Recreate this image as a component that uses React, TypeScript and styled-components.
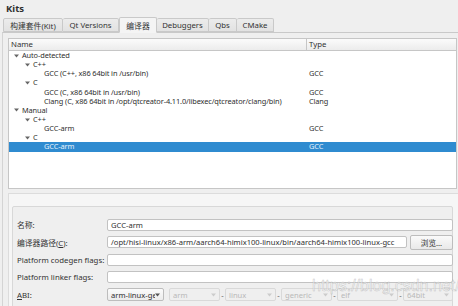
import React from 'react';
import styled, { createGlobalStyle } from 'styled-components';

const GlobalStyle = createGlobalStyle`
  html, body {
    margin: 0;
    padding: 0;
    background: #efefef;
    overflow: hidden;
  }
  body {
    font-family: "Noto Sans", "Noto Sans CJK SC", sans-serif;
    color: #3c3c3c;
    font-size: 8px;
  }
`;

const Page = styled.div`
  position: relative;
  width: 458px;
  height: 306px;
  overflow: hidden;
`;

const Title = styled.div`
  height: 17px;
  padding-left: 6px;
  font-size: 9.5px;
  font-weight: bold;
  line-height: 17px;
  color: #2e2e2e;
`;

const TabBar = styled.div`
  display: flex;
  align-items: flex-end;
  height: 15px;
  padding-left: 3px;
  position: relative;
  z-index: 1;
`;

const Tab = styled.div<{ $w: number; $active?: boolean }>`
  width: ${(p) => p.$w}px;
  height: ${(p) => (p.$active ? 16 : 14)}px;
  box-sizing: border-box;
  display: flex;
  align-items: center;
  justify-content: center;
  border: 1px solid #c9c9c9;
  border-left: ${(p) => (p.$active ? '1px solid #c9c9c9' : 'none')};
  border-bottom: ${(p) => (p.$active ? '1px solid #f4f4f4' : '1px solid #c9c9c9')};
  border-radius: 2px 2px 0 0;
  background: ${(p) => (p.$active ? '#f4f4f4' : 'linear-gradient(#ececec, #e2e2e2)')};
  font-size: 7.8px;
  color: #333;
  white-space: nowrap;
  margin-bottom: ${(p) => (p.$active ? '-1px' : '0')};
  &:first-child {
    border-left: 1px solid #c9c9c9;
  }
`;

const Pane = styled.div`
  margin-left: 2px;
  border-top: 1px solid #c9c9c9;
  border-left: 1px solid #d4d4d4;
  padding: 5px 0 0 5px;
`;

const Tree = styled.div`
  height: 151px;
  box-sizing: border-box;
  margin-right: 1px;
  border: 1px solid #c6c6c6;
  background: #ffffff;
  overflow: hidden;
`;

const HeaderRow = styled.div`
  display: grid;
  grid-template-columns: 297px 1fr;
  height: 11px;
  background: linear-gradient(#fbfbfb, #ececec);
  border-bottom: 1px solid #c6c6c6;
`;

const HeaderCell = styled.div<{ $divider?: boolean }>`
  padding-left: 2px;
  line-height: 11px;
  font-size: 7.8px;
  color: #333;
  border-left: ${(p) => (p.$divider ? '1px solid #c6c6c6' : 'none')};
`;

const Row = styled.div<{ $selected?: boolean }>`
  display: grid;
  grid-template-columns: 297px 1fr;
  height: 9.15px;
  line-height: 9.15px;
  font-size: 7.4px;
  letter-spacing: -0.12px;
  white-space: nowrap;
  background: ${(p) => (p.$selected ? '#2f8bd0' : 'transparent')};
  color: ${(p) => (p.$selected ? '#e6f1fa' : '#2f2f2f')};
`;

const NameCell = styled.div<{ $level: number }>`
  display: flex;
  align-items: center;
  padding-left: ${(p) => 2 + p.$level * 11}px;
  overflow: visible;
`;

const TypeCell = styled.div`
  padding-left: 3px;
`;

const Twisty = styled.span`
  display: inline-flex;
  width: 11px;
  justify-content: center;
  align-items: center;
`;

const Spacer = styled.span`
  display: inline-block;
  width: 11px;
`;

const Details = styled.div`
  margin-top: 4px;
  height: 120px;
  border: 1px solid #dcdcdc;
  border-right: none;
  background: #f6f6f6;
  padding: 12px 5px 0 3px;
`;

const Group = styled.div`
  height: 110px;
  border: 1px solid #d8d8d8;
  border-radius: 2px;
  background: #efefef;
  padding: 9px 2px 0 4px;
`;

const Form = styled.div`
  display: grid;
  grid-template-columns: 90px 1fr;
  grid-auto-rows: 17.5px;
  align-items: center;
`;

const Label = styled.div`
  font-size: 7.8px;
  color: #333;
  white-space: nowrap;
`;

const Input = styled.div`
  height: 12px;
  box-sizing: border-box;
  border: 1px solid #c2c2c2;
  border-radius: 2px;
  background: #fff;
  padding-left: 3px;
  font-size: 7.6px;
  line-height: 10px;
  color: #2f2f2f;
  white-space: nowrap;
  overflow: hidden;
  flex: 1;
`;

const FieldLine = styled.div`
  display: flex;
  align-items: center;
  gap: 3px;
`;

const Button = styled.div`
  width: 43px;
  height: 15px;
  box-sizing: border-box;
  border: 1px solid #bdbdbd;
  border-radius: 2px;
  background: linear-gradient(#fafafa, #e9e9e9);
  display: flex;
  align-items: center;
  justify-content: center;
  font-size: 7.6px;
  color: #333;
`;

const AbiLine = styled.div`
  display: flex;
  align-items: center;
`;

const Combo = styled.div<{ $w: number; $disabled?: boolean }>`
  width: ${(p) => p.$w}px;
  height: 13px;
  box-sizing: border-box;
  border: 1px solid ${(p) => (p.$disabled ? '#d9d9d9' : '#bdbdbd')};
  border-radius: 2px;
  background: ${(p) => (p.$disabled ? '#efefef' : 'linear-gradient(#fbfbfb, #ececec)')};
  color: ${(p) => (p.$disabled ? '#b9b9b9' : '#2f2f2f')};
  display: flex;
  align-items: center;
  padding: 0 3px 0 3px;
  font-size: 7.6px;
  white-space: nowrap;
  overflow: hidden;
`;

const ComboText = styled.span`
  flex: 1;
  overflow: hidden;
`;

const Dash = styled.span`
  width: 5px;
  text-align: center;
  font-size: 7.6px;
  color: #555;
`;

const Watermark = styled.div`
  position: absolute;
  left: 312px;
  top: 277px;
  font-family: "Liberation Sans", sans-serif;
  font-size: 16px;
  color: rgba(255, 255, 255, 0.55);
  -webkit-text-stroke: 0.5px rgba(150, 150, 150, 0.55);
  white-space: nowrap;
  pointer-events: none;
`;

const Arrow = ({ color = '#555' }: { color?: string }) => (
  <svg width="5" height="4" viewBox="0 0 5 4">
    <path d="M0 0.5 L5 0.5 L2.5 3.5 Z" fill={color} />
  </svg>
);

interface TreeItem {
  name: string;
  type?: string;
  level: number;
  branch?: boolean;
  selected?: boolean;
}

const items: TreeItem[] = [
  { name: 'Auto-detected', level: 0, branch: true },
  { name: 'C++', level: 1, branch: true },
  { name: 'GCC (C++, x86 64bit in /usr/bin)', type: 'GCC', level: 2 },
  { name: 'C', level: 1, branch: true },
  { name: 'GCC (C, x86 64bit in /usr/bin)', type: 'GCC', level: 2 },
  { name: 'Clang (C, x86 64bit in /opt/qtcreator-4.11.0/libexec/qtcreator/clang/bin)', type: 'Clang', level: 2 },
  { name: 'Manual', level: 0, branch: true },
  { name: 'C++', level: 1, branch: true },
  { name: 'GCC-arm', type: 'GCC', level: 2 },
  { name: 'C', level: 1, branch: true },
  { name: 'GCC-arm', type: 'GCC', level: 2, selected: true },
];

const tabs = [
  { label: '构建套件(Kit)', w: 60 },
  { label: 'Qt Versions', w: 56 },
  { label: '编译器', w: 38, active: true },
  { label: 'Debuggers', w: 52 },
  { label: 'Qbs', w: 28 },
  { label: 'CMake', w: 37 },
];

export default function App() {
  return (
    <Page>
      <GlobalStyle />
      <Title>Kits</Title>
      <TabBar>
        {tabs.map((t) => (
          <Tab key={t.label} $w={t.w} $active={t.active}>
            {t.label}
          </Tab>
        ))}
      </TabBar>
      <Pane>
        <Tree>
          <HeaderRow>
            <HeaderCell>Name</HeaderCell>
            <HeaderCell $divider>Type</HeaderCell>
          </HeaderRow>
          {items.map((it, i) => (
            <Row key={i} $selected={it.selected}>
              <NameCell $level={it.level}>
                {it.branch ? (
                  <Twisty>
                    <Arrow color="#666" />
                  </Twisty>
                ) : (
                  <Spacer />
                )}
                {it.name}
              </NameCell>
              <TypeCell>{it.type}</TypeCell>
            </Row>
          ))}
        </Tree>
        <Details>
          <Group>
            <Form>
              <Label>名称:</Label>
              <Input>GCC-arm</Input>
              <Label>
                编译器路径(<u>C</u>):
              </Label>
              <FieldLine>
                <Input>/opt/hisi-linux/x86-arm/aarch64-himix100-linux/bin/aarch64-himix100-linux-gcc</Input>
                <Button>浏览...</Button>
              </FieldLine>
              <Label>Platform codegen flags:</Label>
              <Input />
              <Label>Platform linker flags:</Label>
              <Input />
              <Label>
                <u>A</u>BI:
              </Label>
              <AbiLine>
                <Combo $w={57}>
                  <ComboText>arm-linux-ge</ComboText>
                  <Arrow />
                </Combo>
                <Dash />
                <Combo $w={51} $disabled>
                  <ComboText>arm</ComboText>
                  <Arrow color="#ccc" />
                </Combo>
                <Dash>-</Dash>
                <Combo $w={51} $disabled>
                  <ComboText>linux</ComboText>
                  <Arrow color="#ccc" />
                </Combo>
                <Dash>-</Dash>
                <Combo $w={51} $disabled>
                  <ComboText>generic</ComboText>
                  <Arrow color="#ccc" />
                </Combo>
                <Dash>-</Dash>
                <Combo $w={61} $disabled>
                  <ComboText>elf</ComboText>
                  <Arrow color="#ccc" />
                </Combo>
                <Dash>-</Dash>
                <Combo $w={50} $disabled>
                  <ComboText>64bit</ComboText>
                  <Arrow color="#ccc" />
                </Combo>
              </AbiLine>
            </Form>
          </Group>
        </Details>
      </Pane>
      <Watermark>https://blog.csdn.net/take_it</Watermark>
    </Page>
  );
}
